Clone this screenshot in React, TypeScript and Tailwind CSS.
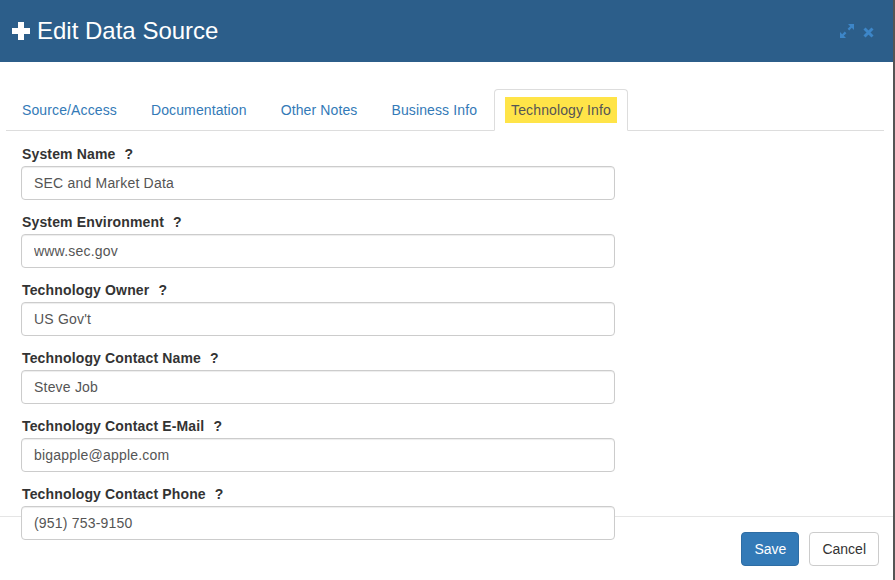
import React from "react";

const fields = [
  ["System Name", "SEC and Market Data"],
  ["System Environment", "www.sec.gov"],
  ["Technology Owner", "US Gov't"],
  ["Technology Contact Name", "Steve Job"],
  ["Technology Contact E-Mail", "bigapple@apple.com"],
  ["Technology Contact Phone", "(951) 753-9150"],
];

const tabs = ["Source/Access", "Documentation", "Other Notes", "Business Info"];

export default function App() {
  return (
    <div className="flex h-[580px] w-[895px] overflow-hidden bg-white font-['Liberation_Sans',Arial,sans-serif] text-[14px] text-[#333]">
      <div className="flex w-[893px] flex-col">
        {/* header */}
        <div className="flex h-[62px] shrink-0 items-center bg-[#2c5e8a] pl-[12px] pr-[19px] text-white">
          <svg width="18" height="18" viewBox="0 0 18 18" className="mt-[-1px]">
            <path d="M6 0h6v6h6v6h-6v6H6v-6H0V6h6z" fill="#fff" />
          </svg>
          <h1 className="ml-[7px] text-[24px] leading-none">Edit Data Source</h1>
          <div className="ml-auto flex items-center gap-[9px] text-[#3d86c8]">
            <svg width="14" height="14" viewBox="0 0 14 14" fill="currentColor">
              <path d="M8 0h6v6l-2.2-2.2-2.6 2.6-1.6-1.6 2.6-2.6z" />
              <path d="M6 14H0V8l2.2 2.2 2.6-2.6 1.6 1.6-2.6 2.6z" />
            </svg>
            <svg width="11" height="11" viewBox="0 0 11 11" className="mt-[2px]">
              <path d="M1.5 1.5l8 8M9.5 1.5l-8 8" stroke="currentColor" strokeWidth="3" />
            </svg>
          </div>
        </div>

        {/* body */}
        <div className="h-[454px] shrink-0">
          <ul className="ml-[6px] mr-[9px] mt-[27px] flex border-b border-[#ddd] tracking-[0.12px]">
            {tabs.map((t, i) => (
              <li key={t} className="-mb-px">
                <a
                  className={
                    i === 0
                      ? "block rounded-t-[4px] border border-transparent py-[7px] pl-[9px] pr-[10px] text-[#337ab7]"
                      : "block rounded-t-[4px] border border-transparent px-[10px] py-[7px] text-[#337ab7]"
                  }
                >
                  <span className="block px-[6px] py-[3px] leading-[20px]">{t}</span>
                </a>
              </li>
            ))}
            <li className="-mb-px">
              <a className="block rounded-t-[4px] border border-[#ddd] border-b-white bg-white px-[10px] py-[7px] text-[#555]">
                <span className="block bg-[#ffe448] px-[6px] py-[3px] leading-[20px]">Technology Info</span>
              </a>
            </li>
          </ul>

          <div className="relative z-10 mt-[13px] pl-[21px]">
            {fields.map(([label, value]) => (
              <div key={label} className="mb-[12px]">
                <div className="mb-[2px] pl-[1px] font-bold leading-[20px] tracking-[0.15px]">
                  {label}
                  <span className="ml-[9px]">?</span>
                </div>
                <input
                  readOnly
                  defaultValue={value}
                  className="block h-[34px] w-[594px] rounded-[4px] border border-[#ccc] bg-white px-[12px] text-[14px] tracking-[0.2px] text-[#555] shadow-[inset_0_1px_1px_rgba(0,0,0,0.075)] outline-none"
                />
              </div>
            ))}
          </div>
        </div>

        {/* footer */}
        <div className="flex justify-end gap-[10px] border-t border-[#e5e5e5] pl-[15px] pr-[14px] pt-[15px]">
          <button className="h-[34px] rounded-[4px] border border-[#2e6da4] bg-[#337ab7] px-[12px] text-white">
            Save
          </button>
          <button className="h-[34px] rounded-[4px] border border-[#ccc] bg-white px-[12px] text-[#333]">
            Cancel
          </button>
        </div>
      </div>
      <div className="w-[2px] shrink-0 bg-[#555]" />
    </div>
  );
}
